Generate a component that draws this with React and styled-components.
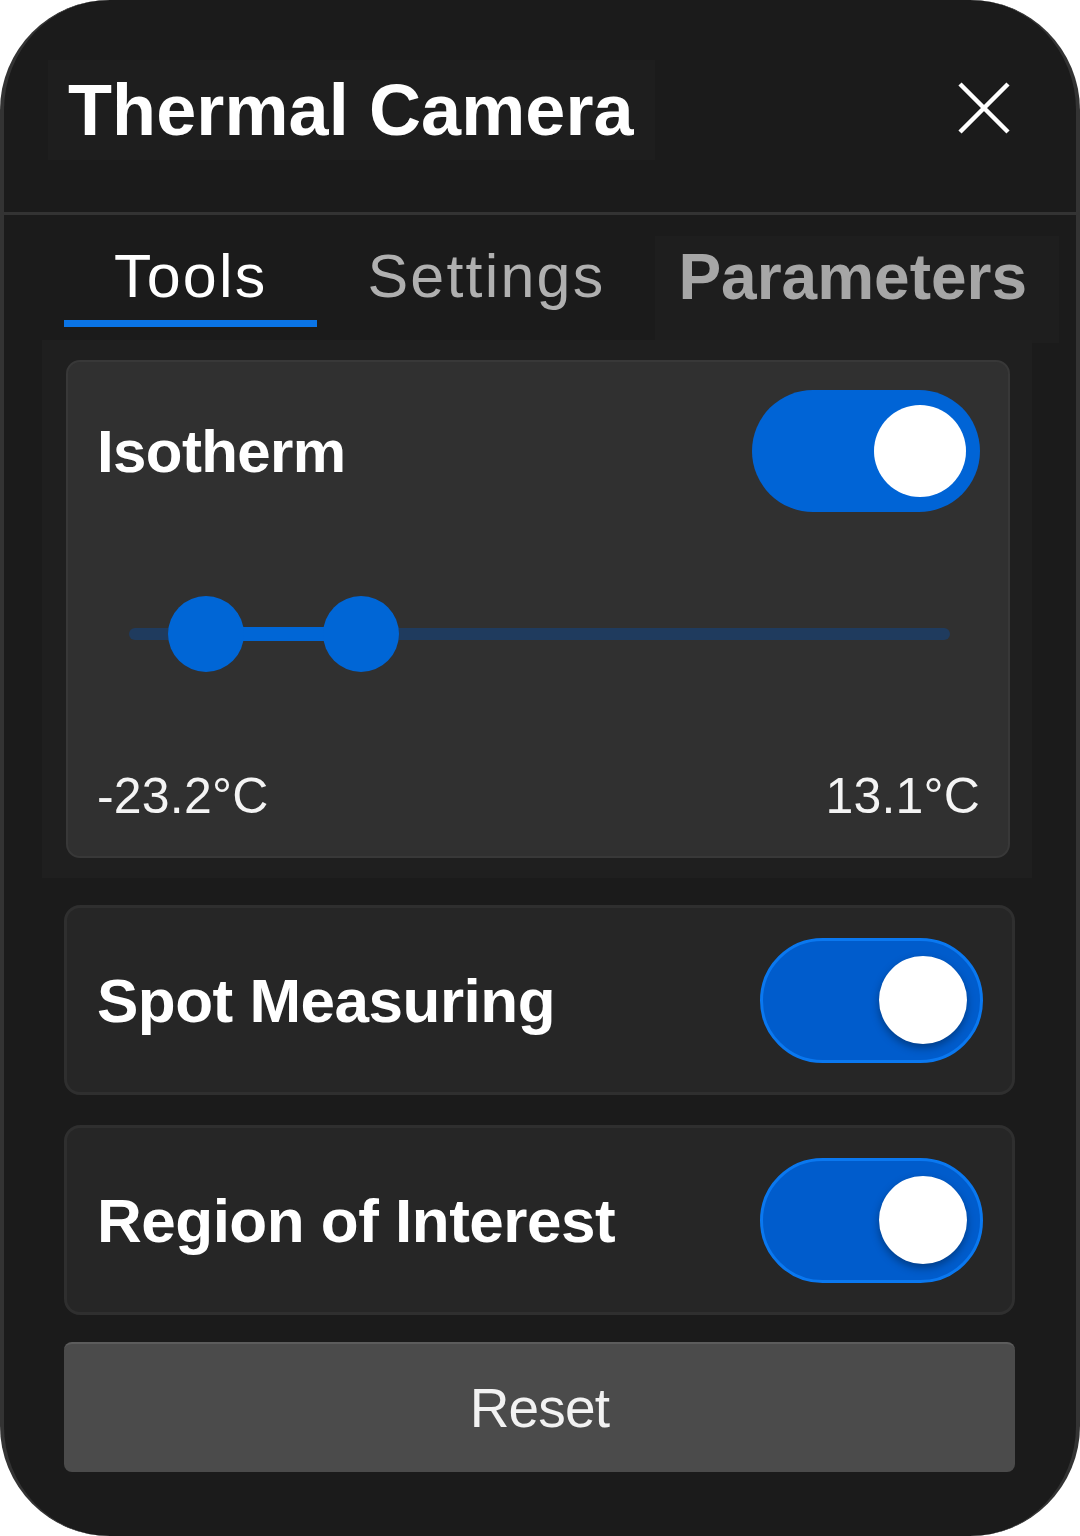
import React from "react";
import styled, { createGlobalStyle } from "styled-components";

const Global = createGlobalStyle`
  html, body { margin: 0; padding: 0; background: #ffffff; }
  body { font-family: "Liberation Sans", Arial, Helvetica, sans-serif; }
  * { box-sizing: border-box; }
`;

const Panel = styled.div`
  width: 1080px;
  height: 1536px;
  background: #1b1b1b;
  border-radius: 110px;
  border-left: 4px solid #333333;
  border-right: 4px solid #333333;
  overflow: hidden;
  display: flex;
  flex-direction: column;
  color: #ffffff;
`;

const Header = styled.header`
  height: 215px;
  flex: none;
  display: flex;
  align-items: flex-start;
  justify-content: space-between;
  padding: 60px 66px 0 44px;
  border-bottom: 3px solid #333333;
`;

const TitleBlock = styled.div`
  background: #1e1e1e;
  width: 607px;
  height: 100px;
  padding: 2px 20px 0;
`;

const Title = styled.h1`
  margin: 0;
  font-size: 72px;
  line-height: 96px;
  font-weight: 700;
  letter-spacing: 0.1px;
  color: #ffffff;
  white-space: nowrap;
`;

const CloseButton = styled.button`
  margin-top: 22px;
  width: 52px;
  height: 52px;
  padding: 0;
  border: none;
  background: transparent;
  display: block;
  cursor: pointer;
`;

const TabRow = styled.nav`
  flex: none;
  height: 125px;
  display: flex;
  align-items: flex-start;
  padding-left: 60px;
`;

const Tab = styled.div`
  height: ${(p) => (p.$shaded ? "107px" : "112px")};
  margin-top: ${(p) => (p.$shaded ? "21px" : "0")};
  padding: ${(p) => (p.$shaded ? "6px 32px 0 23px" : "26px 50px 0")};
  background: ${(p) => (p.$shaded ? "#1e1e1e" : "transparent")};
  border-bottom: 7px solid ${(p) => (p.$active ? "#0a74e6" : "transparent")};
  font-size: ${(p) => (p.$shaded ? "64px" : "61px")};
  font-weight: ${(p) => (p.$shaded ? 700 : 400)};
  line-height: 70px;
  letter-spacing: ${(p) => (p.$shaded ? "0px" : "2.2px")};
  color: ${(p) => (p.$active ? "#ffffff" : p.$shaded ? "#a6a6a6" : "#b0b0b0")};
  white-space: nowrap;
`;

const Content = styled.main`
  flex: 1;
  display: flex;
  flex-direction: column;
  padding: 0 61px 0 60px;
`;

const IsoWrap = styled.section`
  margin: 0 -17px 0 -22px;
  padding: 20px 22px 20px 24px;
  background: #1f1f1f;
`;

const IsoCard = styled.div`
  height: 498px;
  background: #303030;
  border: 2px solid #383838;
  border-radius: 14px;
  padding: 28px 28px 30px 29px;
  display: flex;
  flex-direction: column;
`;

const CardHead = styled.div`
  display: flex;
  align-items: center;
  justify-content: space-between;
  height: 122px;
`;

const CardTitle = styled.span`
  font-size: ${(p) => p.$size || 62}px;
  font-weight: 700;
  letter-spacing: ${(p) => p.$spacing ?? -0.5}px;
  color: #ffffff;
  white-space: nowrap;
`;

const Switch = styled.div`
  flex: none;
  width: ${(p) => p.$w}px;
  height: ${(p) => p.$h}px;
  border-radius: ${(p) => p.$h / 2}px;
  background: ${(p) => p.$bg};
  border: ${(p) => (p.$ring ? `3px solid ${p.$ring}` : "none")};
  display: flex;
  align-items: center;
  justify-content: flex-end;
  padding-right: ${(p) => p.$inset}px;
`;

const Knob = styled.div`
  width: ${(p) => p.$d}px;
  height: ${(p) => p.$d}px;
  border-radius: 50%;
  background: #ffffff;
  box-shadow: ${(p) => (p.$shadow ? "0 4px 8px rgba(0,0,0,0.35)" : "none")};
`;

const SliderArea = styled.div`
  position: relative;
  height: 76px;
  margin: 84px 30px 0 32px;
  display: flex;
  align-items: center;
`;

const Track = styled.div`
  position: relative;
  width: 100%;
  height: 12px;
  border-radius: 6px;
  background: #1f3b5e;
`;

const Range = styled.div`
  position: absolute;
  top: -1px;
  height: 14px;
  background: #0066d6;
`;

const Thumb = styled.div`
  position: absolute;
  top: 50%;
  width: 76px;
  height: 76px;
  margin: -38px 0 0 -38px;
  border-radius: 50%;
  background: #0066d6;
`;

const Labels = styled.div`
  margin-top: 94px;
  display: flex;
  justify-content: space-between;
  font-size: 50px;
  line-height: 60px;
  letter-spacing: 0.2px;
  color: #f4f4f4;
`;

const ToggleCard = styled.div`
  margin-top: ${(p) => p.$gap}px;
  height: 190px;
  background: #262626;
  border: 3px solid #2f2f2f;
  border-radius: 16px;
  padding: 0 29px 0 30px;
  display: flex;
  align-items: center;
  justify-content: space-between;
`;

const ResetButton = styled.button`
  margin-top: 27px;
  height: 130px;
  width: 100%;
  border: none;
  border-top: 2px solid #5c5c5c;
  border-radius: 8px;
  background: #4b4b4b;
  color: #f2f2f2;
  font-family: "Liberation Sans", Arial, Helvetica, sans-serif;
  font-size: 55px;
  letter-spacing: -0.8px;
  cursor: pointer;
`;

const CloseIcon = () => (
  <svg width="52" height="52" viewBox="0 0 52 52">
    <path d="M2 2 L50 50 M50 2 L2 50" stroke="#ffffff" strokeWidth="4.5" fill="none" />
  </svg>
);

const low = 9.4;
const high = 28.2;

export default function App() {
  return (
    <>
      <Global />
      <Panel>
        <Header>
          <TitleBlock>
            <Title>Thermal Camera</Title>
          </TitleBlock>
          <CloseButton aria-label="Close">
            <CloseIcon />
          </CloseButton>
        </Header>
        <TabRow>
          <Tab $active>Tools</Tab>
          <Tab>Settings</Tab>
          <Tab $shaded>Parameters</Tab>
        </TabRow>
        <Content>
          <IsoWrap>
            <IsoCard>
              <CardHead>
                <CardTitle $size={60} $spacing={-0.6}>Isotherm</CardTitle>
                <Switch $w={228} $h={122} $bg="#0064d6" $inset={14}>
                  <Knob $d={92} />
                </Switch>
              </CardHead>
              <SliderArea>
                <Track>
                  <Range style={{ left: `${low}%`, width: `${high - low}%` }} />
                  <Thumb style={{ left: `${low}%` }} />
                  <Thumb style={{ left: `${high}%` }} />
                </Track>
              </SliderArea>
              <Labels>
                <span>-23.2°C</span>
                <span>13.1°C</span>
              </Labels>
            </IsoCard>
          </IsoWrap>
          <ToggleCard $gap={27}>
            <CardTitle>Spot Measuring</CardTitle>
            <Switch $w={223} $h={125} $bg="#005ccc" $ring="#0a78f0" $inset={13}>
              <Knob $d={88} $shadow />
            </Switch>
          </ToggleCard>
          <ToggleCard $gap={30}>
            <CardTitle>Region of Interest</CardTitle>
            <Switch $w={223} $h={125} $bg="#005ccc" $ring="#0a78f0" $inset={13}>
              <Knob $d={88} $shadow />
            </Switch>
          </ToggleCard>
          <ResetButton>Reset</ResetButton>
        </Content>
      </Panel>
    </>
  );
}
